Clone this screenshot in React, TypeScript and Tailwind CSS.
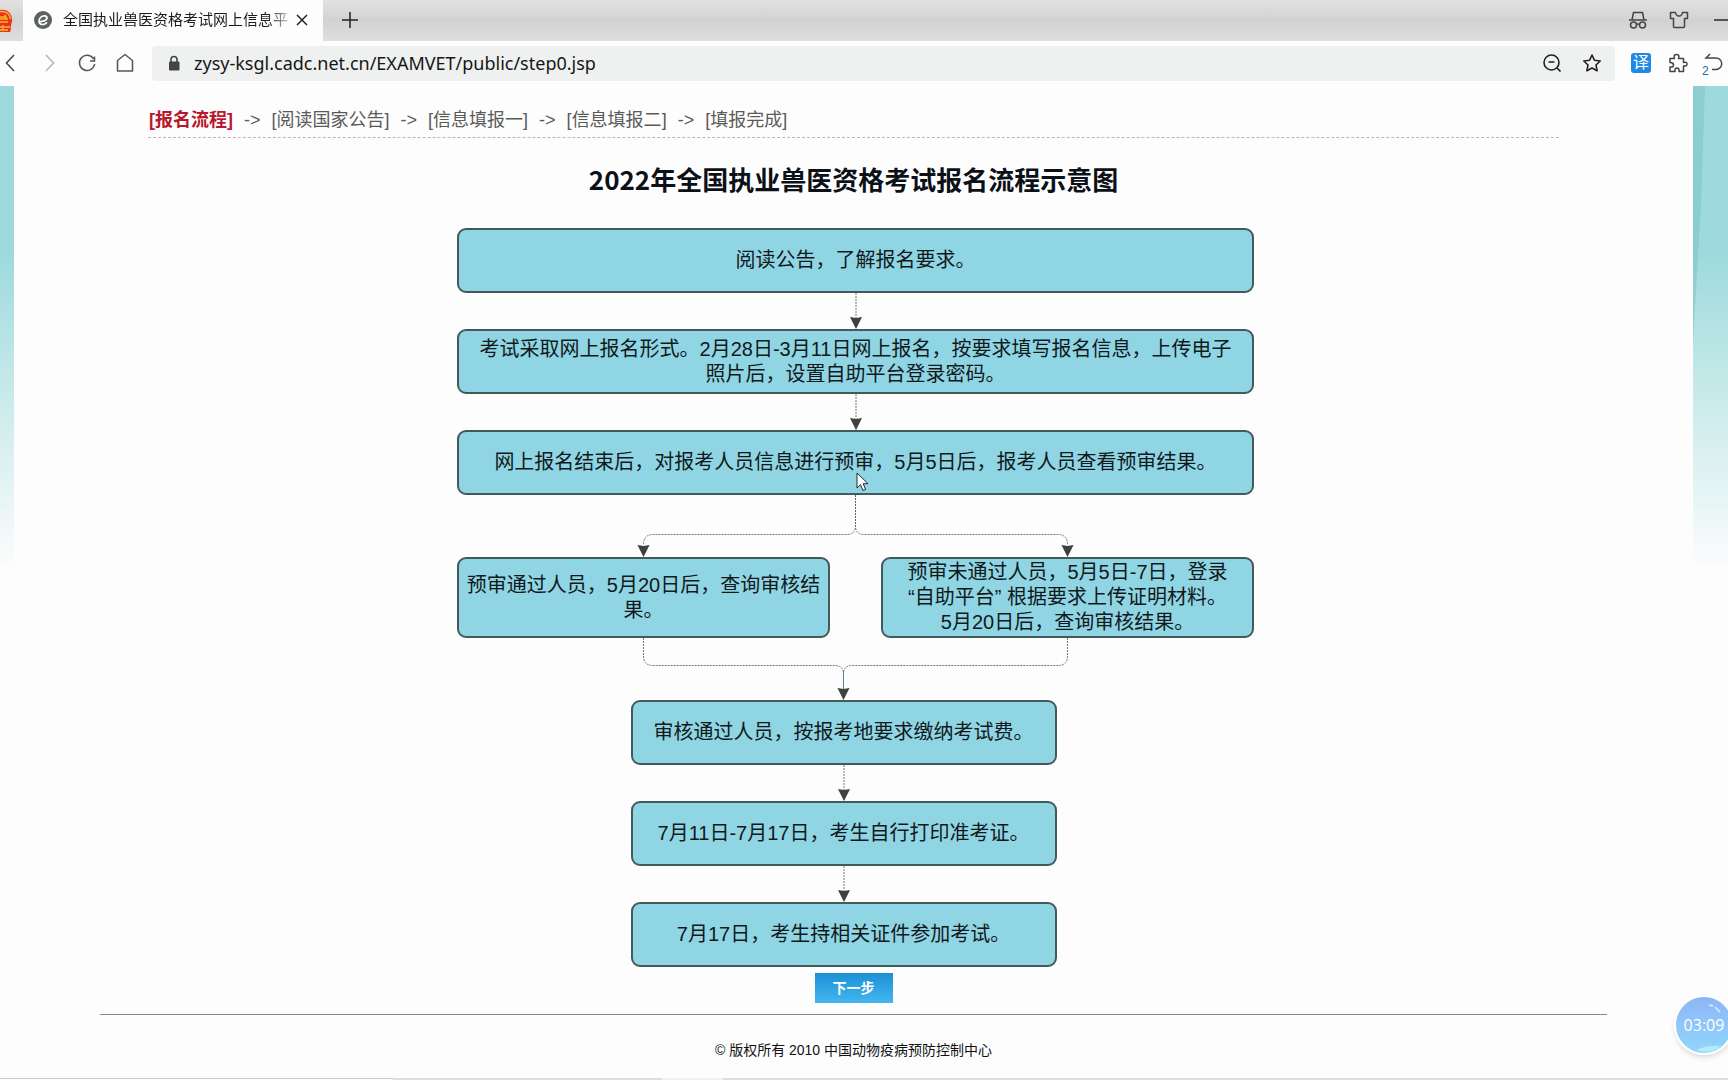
import { Fragment, ReactNode } from "react";

const steps = ["阅读国家公告", "信息填报一", "信息填报二", "填报完成"];

interface BoxProps {
    lines: string[];
    tall?: boolean;
    children?: ReactNode;
}

function Box({ lines, tall, children }: BoxProps) {
    return (
        <div className={`relative flex w-full flex-col items-center justify-center rounded-[9px] border-2 border-[#44595c] bg-[#90d5e3] text-center text-xl leading-[25px] text-[#10191c] ${tall ? "h-[81px]" : "h-[65px]"}`}>
            {lines.map((line) => (
                <p key={line} className="whitespace-nowrap">{line}</p>
            ))}
            {children}
        </div>
    );
}

function Arrow() {
    return (
        <svg className="block h-9 w-3 self-center" viewBox="0 0 12 36" aria-hidden="true">
            <path d="M6 0V25" stroke="#6f7b77" strokeDasharray="2 1" fill="none" />
            <path d="M0 24 6 25 12 24 6 36Z" fill="#3c423c" />
        </svg>
    );
}

function Split() {
    return (
        <svg className="block w-full" viewBox="0 0 797 62" aria-hidden="true">
            <g fill="none" stroke="#6f7b77" strokeDasharray="2 1">
                <path d="M398.500 0V33" stroke="#4d7050" />
                <path d="M398.500 33Q397 39.500 390 39.500H196Q186.500 39.500 186.500 50" />
                <path d="M398.500 33Q400 39.500 407 39.500H601Q610.500 39.500 610.500 50" />
            </g>
            <path d="M180.500 50 186.500 51 192.500 50 186.500 62ZM604.500 50 610.500 51 616.500 50 610.500 62Z" fill="#3c423c" />
        </svg>
    );
}

function Merge() {
    return (
        <svg className="block w-full" viewBox="0 0 797 62" aria-hidden="true">
            <g fill="none" stroke="#6f7b77" strokeDasharray="2 1">
                <path d="M186.500 0V18Q186.500 27.500 196 27.500H378Q385 27.500 386.500 34" />
                <path d="M610.500 0V18Q610.500 27.500 601 27.500H395Q388 27.500 386.500 34" />
            </g>
            <path d="M386.500 34V52" stroke="#5b8794" />
            <path d="M380.500 50 386.500 51 392.500 50 386.500 62Z" fill="#3c423c" />
        </svg>
    );
}

function TabBar() {
    return (
        <header className="flex h-[41px] items-stretch bg-linear-to-b from-[#e2e2e2] via-[#d2d2d2] to-[#dfdfdf]">
            <div className="flex w-[23px] items-center">
                <svg className="h-6 w-3.5" viewBox="0 0 14 24" aria-hidden="true">
                    <path d="M0 1C8 0 12 5 12 11 12 15 10 17 11 20L10 23H0Z" fill="#e8321c" />
                    <path d="M0 2.500C6 2 10 5 10.500 10M0 8H5V6L7 10H0M0 13H8M0 18H10M3 16V22M0 21H8" stroke="#f6b731" strokeWidth="1.500" fill="none" />
                </svg>
            </div>
            <div className="flex w-[300px] items-center bg-[#fdfdfd] pb-0.5 pl-[11px] pr-3.5">
                <svg className="size-[18px] shrink-0" viewBox="0 0 18 18" aria-hidden="true">
                    <circle cx="9" cy="9" r="9" fill="#5c6163" />
                    <path d="M4.500 10.500C8 11 13 9.500 13 7 13 4.500 9 4 6.500 6.500 4 9 4.500 13 8 13.500 10 13.700 12 12.500 13 11.200" stroke="#fff" strokeWidth="1.700" fill="none" />
                </svg>
                <span className="ml-[11px] flex-1 whitespace-nowrap pt-0.5 text-[15px] text-[#1c1c1c] [mask-image:linear-gradient(to_right,#000_90%,#0004)]">全国执业兽医资格考试网上信息平</span>
                <button aria-label="关闭标签页" className="ml-1.5 shrink-0">
                    <svg className="size-3.5" viewBox="0 0 14 14" stroke="#222" strokeWidth="1.500">
                        <path d="M2 2 12 12M12 2 2 12" />
                    </svg>
                </button>
            </div>
            <button aria-label="新建标签页" className="ml-[19px] pb-0.5">
                <svg className="size-4" viewBox="0 0 16 16" stroke="#222" strokeWidth="1.500">
                    <path d="M8 0V16M0 8H16" />
                </svg>
            </button>
            <div className="ml-auto flex items-center gap-[21px] pb-0.5">
                <button aria-label="无痕模式">
                    <svg className="h-[18px] w-5" viewBox="0 0 20 18" fill="none" stroke="#444" strokeWidth="1.500">
                        <path d="M1 9H19M4 9 5.500 1.500H14.500L16 9M8.500 13.500Q10 12.500 11.500 13.500" />
                        <circle cx="5.500" cy="14" r="3" />
                        <circle cx="14.500" cy="14" r="3" />
                    </svg>
                </button>
                <button aria-label="皮肤">
                    <svg className="h-[18px] w-5" viewBox="0 0 20 18" fill="none" stroke="#444" strokeWidth="1.500" strokeLinejoin="round">
                        <path d="M1.500 1.500H6.500Q7 5 10 5T13.500 1.500H18.500V7.500H15.500V15.500Q15.500 16.500 14.500 16.500H5.500Q4.500 16.500 4.500 15.500V7.500H1.500Z" />
                    </svg>
                </button>
                <button aria-label="最小化" className="ml-1 h-0.5 w-3.5 bg-[#555]" />
            </div>
        </header>
    );
}

function Toolbar() {
    return (
        <nav className="flex h-[45px] items-center bg-[#fdfdfd] pb-px">
            <div className="flex w-[152px] shrink-0 items-center gap-5 pl-0.5">
                <button aria-label="后退">
                    <svg className="h-5 w-[18px]" viewBox="0 0 18 20" fill="none" stroke="#444" strokeWidth="1.500">
                        <path d="M12 2 4.500 10 12 18" />
                    </svg>
                </button>
                <button aria-label="前进">
                    <svg className="h-5 w-[18px]" viewBox="0 0 18 20" fill="none" stroke="#b5b5b5" strokeWidth="1.500">
                        <path d="M6 2 13.500 10 6 18" />
                    </svg>
                </button>
                <button aria-label="刷新">
                    <svg className="h-5 w-[18px]" viewBox="0 0 18 20" fill="none" stroke="#555" strokeWidth="1.500">
                        <path d="M15.600 6A7.600 7.600 0 1 0 16.600 11M16.500 3.500V8H12" />
                    </svg>
                </button>
                <button aria-label="主页">
                    <svg className="h-5 w-[18px]" viewBox="0 0 18 20" fill="none" stroke="#555" strokeWidth="1.500" strokeLinejoin="round">
                        <path d="M1.500 7.500 9 1.500 16.500 7.500V18H1.500Z" />
                    </svg>
                </button>
            </div>
            <div className="flex h-[35px] flex-1 items-center rounded-sm bg-[#eff1f0] px-3.5">
                <svg className="h-4 w-4 shrink-0" viewBox="0 0 16 16" aria-hidden="true">
                    <path d="M5 7V4.500A3 3 0 0 1 11 4.500V7" stroke="#444" strokeWidth="1.600" fill="none" />
                    <rect x="3" y="6.500" width="10.500" height="9" rx="1" fill="#444" />
                </svg>
                <input
                    aria-label="地址栏"
                    className="ml-3 flex-1 bg-transparent font-['Noto_Sans','Open_Sans',sans-serif] text-lg text-[#161616] outline-none"
                    defaultValue="zysy-ksgl.cadc.net.cn/EXAMVET/public/step0.jsp"
                />
                <button aria-label="缩小">
                    <svg className="size-[18px]" viewBox="0 0 18 18" fill="none" stroke="#222" strokeWidth="1.600">
                        <circle cx="8.500" cy="8.500" r="7.500" />
                        <path d="M5.500 8H11.500M14 14 17.500 17.500" />
                    </svg>
                </button>
                <button aria-label="收藏" className="ml-[22px]">
                    <svg className="size-[18px]" viewBox="0 0 18 18" fill="none" stroke="#222" strokeWidth="1.600" strokeLinejoin="round">
                        <path d="M9 1 11.500 6.300 17.200 7 13 11 14.100 16.800 9 14 3.900 16.800 5 11 0.800 7 6.500 6.300Z" />
                    </svg>
                </button>
            </div>
            <div className="flex w-[113px] shrink-0 items-center pl-4">
                <button aria-label="翻译" className="size-5 rounded-[3px] bg-[#1f8ae6] text-base leading-5 text-white">译</button>
                <button aria-label="扩展" className="ml-[17px]">
                    <svg className="size-5" viewBox="0 0 20 20" fill="none" stroke="#444" strokeWidth="1.500" strokeLinejoin="round">
                        <path d="M2 5.500H6.500Q5 1.500 8.500 1.500T10.500 5.500H15.500V9.500Q19 8.500 19 11T15.500 13V18.500H11Q11.500 15 9 15T7 18.500H2V14Q5.500 14.500 5.500 12T2 9.500Z" />
                    </svg>
                </button>
                <button aria-label="恢复标签页" className="relative ml-3.5">
                    <svg className="h-5 w-[22px]" viewBox="0 0 22 20" fill="none" stroke="#444" strokeWidth="1.500">
                        <path d="M8 1 4 5H14A5.500 5.500 0 0 1 14 16.500H10" />
                    </svg>
                    <span className="absolute -bottom-1 left-0 text-xs leading-3 text-[#2c6ca8]">2</span>
                </button>
            </div>
        </nav>
    );
}

export default function App() {
    return (
        <div className="relative flex min-h-screen flex-col overflow-hidden bg-[#fdfdfd] font-['Liberation_Sans','Noto_Sans_CJK_SC',sans-serif]">
            <TabBar />
            <Toolbar />
            <div className="flex flex-1">
                <div className="h-[485px] w-3.5 shrink-0 bg-linear-to-b from-[#9edadd] from-35% via-[#c3e8e8] via-60% to-[#fdfdfd]" />
                <main className="flex flex-1 flex-col items-center px-[86px]">
                    <div className="w-full px-12">
                        <ol className="mt-5 flex h-8 items-start gap-[11px] border-b border-dashed border-[#b8b8b8] pl-px text-lg leading-7 text-[#5a5a5a]">
                            <li className="font-bold text-[#b8182c]">[报名流程]</li>
                            {steps.map((step) => (
                                <Fragment key={step}>
                                    <li aria-hidden="true">-&gt;</li>
                                    <li>[{step}]</li>
                                </Fragment>
                            ))}
                        </ol>
                    </div>
                    <h1 className="mt-[23px] font-['Noto_Sans_CJK_SC',sans-serif] text-[26px] font-bold leading-9 text-[#0c1118]">2022年全国执业兽医资格考试报名流程示意图</h1>
                    <section className="ml-1 mt-[31px] flex w-full max-w-[797px] flex-col">
                        <Box lines={["阅读公告，了解报名要求。"]} />
                        <Arrow />
                        <Box lines={["考试采取网上报名形式。2月28日-3月11日网上报名，按要求填写报名信息，上传电子", "照片后，设置自助平台登录密码。"]} />
                        <Arrow />
                        <Box lines={["网上报名结束后，对报考人员信息进行预审，5月5日后，报考人员查看预审结果。"]}>
                            <svg className="absolute left-1/2 top-10 h-5 w-3.5" viewBox="0 0 14 20" aria-hidden="true">
                                <path d="M1 1V16L4.500 12.700 7 18.500 9.600 17.400 7.200 11.700H12Z" fill="#fff" stroke="#1b2738" />
                            </svg>
                        </Box>
                        <Split />
                        <div className="grid grid-cols-2 gap-[51px]">
                            <Box tall lines={["预审通过人员，5月20日后，查询审核结", "果。"]} />
                            <Box tall lines={["预审未通过人员，5月5日-7日，登录", "“自助平台” 根据要求上传证明材料。", "5月20日后，查询审核结果。"]} />
                        </div>
                        <Merge />
                        <div className="mr-6 flex w-full max-w-[426px] flex-col self-center">
                            <Box lines={["审核通过人员，按报考地要求缴纳考试费。"]} />
                            <Arrow />
                            <Box lines={["7月11日-7月17日，考生自行打印准考证。"]} />
                            <Arrow />
                            <Box lines={["7月17日，考生持相关证件参加考试。"]} />
                        </div>
                    </section>
                    <button className="mt-1.5 h-[30px] w-[78px] bg-linear-to-b from-[#1a90d4] to-[#43b6f0] text-sm font-bold text-white">下一步</button>
                    <footer className="mt-[11px] w-full border-t border-[#8a8a8a] pt-[25px] text-center text-sm leading-5 text-[#111]">
                        © 版权所有 2010 中国动物疫病预防控制中心
                    </footer>
                </main>
                <div className="h-[485px] w-[35px] shrink-0 bg-linear-to-b from-[#9edadd] from-35% via-[#c3e8e8] via-60% to-[#fdfdfd]">
                    <svg className="block h-[260px] w-3" viewBox="0 0 12 260" preserveAspectRatio="none" aria-hidden="true">
                        <path d="M0 0H12L8 120 1 240 0 260Z" fill="#5fb0b4" fillOpacity=".3" />
                    </svg>
                </div>
            </div>
            <div className="flex h-0.5 items-start">
                <div className="h-px w-[393px] bg-[#cccccc]" />
                <div className="h-0.5 w-[269px] bg-[#dedede]" />
                <div className="h-0.5 w-[61px] bg-[#f3f3f3]" />
                <div className="h-0.5 flex-1 bg-[#dedede]" />
            </div>
            <div className="absolute -right-1.5 bottom-[25px] flex size-[60px] items-center justify-center rounded-full border-2 border-white bg-linear-to-b from-[#8eb6f6] to-[#90d6fb] font-['Open_Sans',sans-serif] text-base text-white shadow-md">
                <svg className="absolute inset-0 size-full" viewBox="0 0 56 56" fill="none" aria-hidden="true">
                    <path d="M33 8 37 9M39 10 44 15" stroke="#fff" strokeOpacity=".7" strokeWidth="1.500" />
                    <path d="M20 53Q32 48 45 49 34 58 20 53Z" fill="#bdf0fd" fillOpacity=".8" />
                </svg>
                <span className="relative">03:09</span>
            </div>
        </div>
    );
}
